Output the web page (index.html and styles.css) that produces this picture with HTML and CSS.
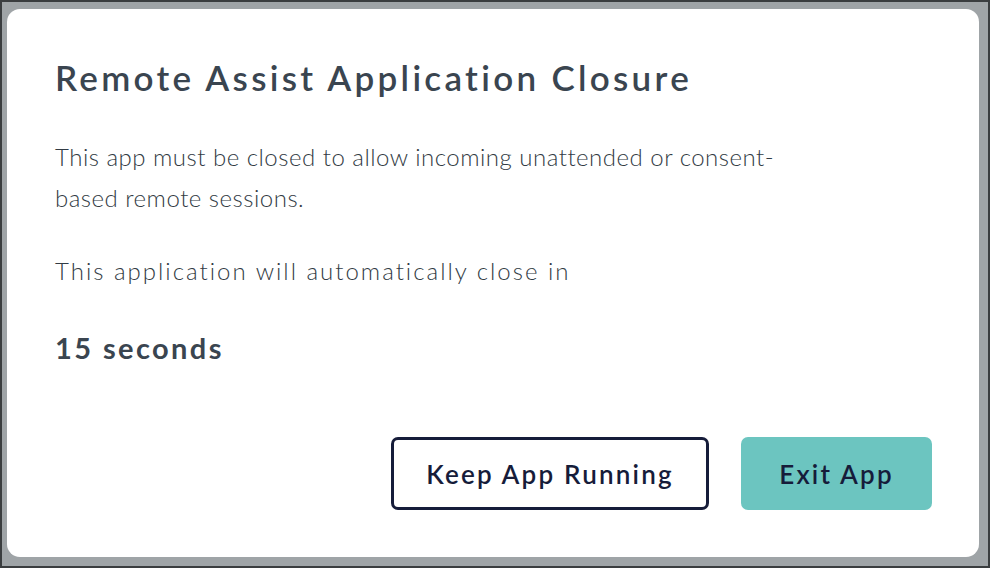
FILE: index.html
```html
<!DOCTYPE html>
<html lang="en">
<head>
    <meta charset="UTF-8">
    <meta name="viewport" content="width=device-width, initial-scale=1.0">
    <title>Remote Assist Application Closure</title>
    <link rel="stylesheet" href="styles.css">
</head>
<body>
    <div class="backdrop">
        <div class="dialog">
            <h1 class="dialog-title">Remote Assist Application Closure</h1>
            <p class="dialog-text">This app must be closed to allow incoming unattended or consent-based remote sessions.</p>
            <p class="dialog-text countdown-label">This application will automatically close in</p>
            <p class="countdown"><span id="seconds">15</span> seconds</p>
            <div class="dialog-actions">
                <button class="btn btn-outline">Keep App Running</button>
                <button class="btn btn-primary">Exit App</button>
            </div>
        </div>
    </div>
</body>
</html>
```

FILE: styles.css
```css
:root {
    --backdrop: #9fa4a7;
    --title-color: #3a4550;
    --text-color: #323b44;
    --navy: #161c3a;
    --teal: #6cc5c0;
}

* {
    margin: 0;
    padding: 0;
    box-sizing: border-box;
    font-family: 'Lato', 'Noto Sans', sans-serif;
}

body {
    width: 990px;
    height: 568px;
    overflow: hidden;
}

.backdrop {
    width: 100%;
    height: 100%;
    background: var(--backdrop);
    border: 2px solid #3a3d3f;
    padding: 7px 9px 9px 5px;
}

.dialog {
    height: 100%;
    background: #fff;
    border-radius: 13px;
    padding: 46px 47px 47px 48px;
    display: flex;
    flex-direction: column;
    color: var(--text-color);
}

.dialog-title {
    font-size: 35px;
    font-weight: 600;
    line-height: 44px;
    letter-spacing: 3.3px;
    color: var(--title-color);
    margin-bottom: 37px;
}

.dialog-text {
    max-width: 760px;
    font-size: 24px;
    font-weight: 300;
    line-height: 41px;
    letter-spacing: 0.5px;
}

.countdown-label {
    margin-top: 32px;
    letter-spacing: 2px;
}

.countdown {
    font-size: 29px;
    font-weight: 700;
    line-height: 36px;
    letter-spacing: 2.4px;
    color: var(--title-color);
    margin-top: 39px;
}

.dialog-actions {
    margin-top: auto;
    display: flex;
    justify-content: flex-end;
    gap: 32px;
}

.btn {
    height: 73px;
    border-radius: 7px;
    font-size: 26px;
    font-weight: 600;
    letter-spacing: 2.2px;
    color: var(--navy);
    cursor: pointer;
}

.btn-outline {
    width: 318px;
    background: #fff;
    border: 3px solid var(--navy);
}

.btn-primary {
    width: 191px;
    background: var(--teal);
    border: none;
}
```
